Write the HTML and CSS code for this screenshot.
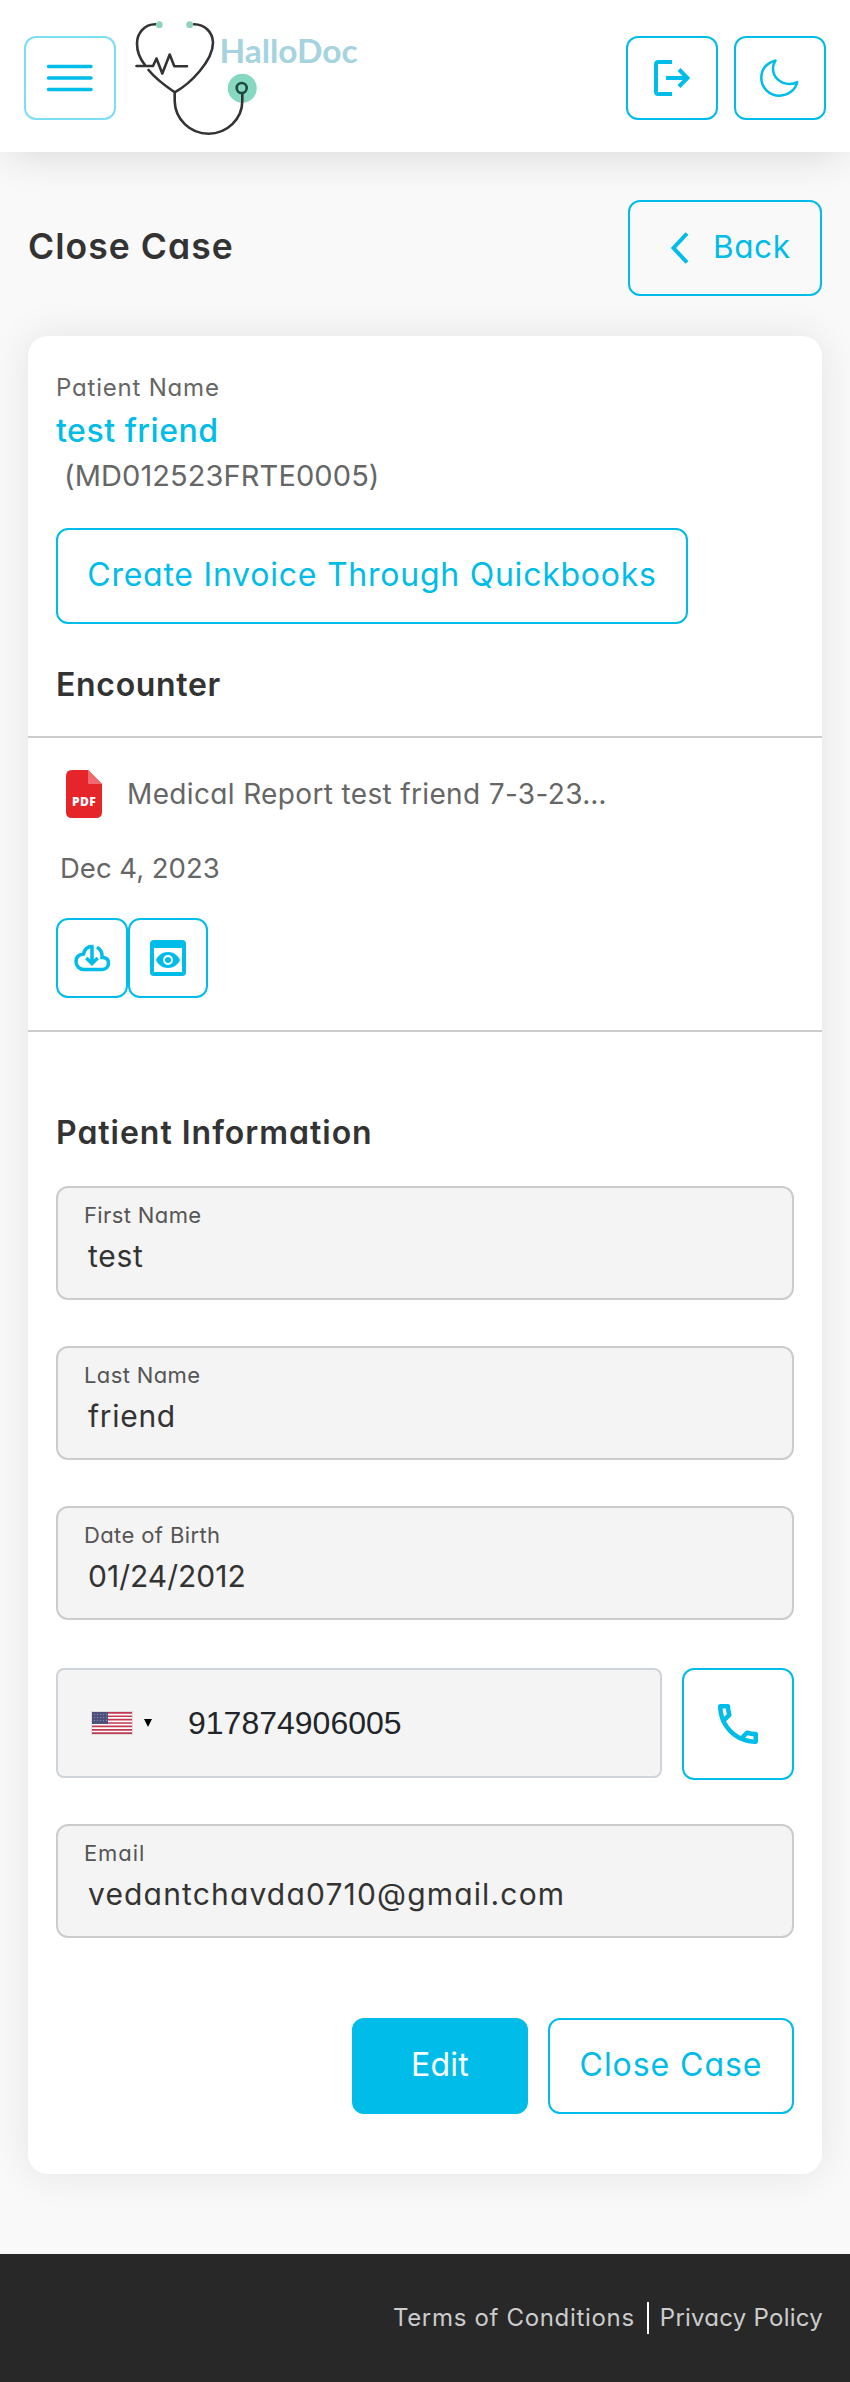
FILE: index.html
```
<!DOCTYPE html>
<html lang="en">
<head>
<meta charset="utf-8">
<title>HalloDoc - Close Case</title>
<link rel="stylesheet" href="styles.css">
</head>
<body>
<header class="topbar">
  <button class="icon-btn menu-btn" aria-label="Menu">
    <svg width="48" height="30" viewBox="0 0 48 30"><path d="M2.500 3.500h42.500M2.500 15h42.500M2.500 26.500h42.500" fill="none" stroke="#00bce9" stroke-width="3.500" stroke-linecap="round"/></svg>
  </button>
  <svg class="logo" width="240" height="136" viewBox="128 8 240 136" role="img" aria-label="HalloDoc">
    <circle cx="242.300" cy="88.300" r="14.500" fill="#86d8c0"/>
    <g fill="none" stroke="#333" stroke-width="2.600" stroke-linecap="round" stroke-linejoin="round">
      <path d="M156 24.300C144 24 137 34 137 43.500C137 52 140 59 145 65"/>
      <path d="M148.500 70C155 78 164 85 174.700 92.300C190 84 213 61 213 42.500C212.500 32 205 24.500 194 24.300"/>
      <path d="M174.700 92.300V101C175 119 190 133.700 208.500 133.700C227 133.700 242.300 119 242.300 101V93.500"/>
      <path d="M136.500 66H153L156.500 58.500L162.300 73.500L169.700 54.500L174.300 66.200H187"/>
      <circle cx="241.700" cy="88" r="5" stroke="#1f4a40"/>
    </g>
    <circle cx="159.300" cy="24.700" r="3.400" fill="#8fd3bf"/><circle cx="189.700" cy="24.700" r="3.400" fill="#8fd3bf"/>
    <text class="logo-text" x="219.500" y="62.500" textLength="138" lengthAdjust="spacingAndGlyphs">HalloDoc</text>
  </svg>
  <div class="topbar-actions">
    <button class="icon-btn" aria-label="Log out">
      <svg width="36" height="36" viewBox="0 0 36 36" fill="none" stroke="#00bce9" stroke-width="4"><path d="M18 2H4.500Q2 2 2 4.500V31.500Q2 34 4.500 34H18M12 18H33M25 9.500L33.500 18L25 26.500"/></svg>
    </button>
    <button class="icon-btn" aria-label="Dark mode">
      <svg width="40" height="40" viewBox="0 0 40 40" fill="none" stroke="#00bce9" stroke-width="2.500" stroke-linejoin="round" stroke-linecap="round"><path d="M15.500 2.500C5.500 5.500 1.300 12 1.300 19.800C1.300 30 9.500 37.700 19.500 37.700C28 37.700 35.500 32 37.200 24C35 25.500 32.500 26 29.500 26C20 26 13 19 13 10.500C13 7.500 13.800 5 15.500 2.500Z"/></svg>
    </button>
  </div>
</header>

<main class="page">
  <div class="title-row">
    <h1 class="title">Close Case</h1>
    <button class="btn back-btn"><svg width="20" height="34" viewBox="0 0 20 34"><path d="M17 2.500L3.500 17L17 31.500" fill="none" stroke="#00bce9" stroke-width="4"/></svg><span class="t-back">Back</span></button>
  </div>

  <section class="card">
    <div class="patient">
      <div class="patient-label">Patient Name</div>
      <div class="patient-name">test friend</div>
      <div class="patient-id">(MD012523FRTE0005)</div>
      <button class="btn invoice-btn">Create Invoice Through Quickbooks</button>
      <h2 class="heading encounter">Encounter</h2>
    </div>

    <div class="document">
      <div class="doc-name">
        <svg width="36" height="48" viewBox="0 0 36 48"><path d="M6 0H22L36 14V42Q36 48 30 48H6Q0 48 0 42V6Q0 0 6 0Z" fill="#e5252a"/><path d="M22 0L36 14H22Z" fill="#f0696c"/><text class="pdf-text" x="6" y="36" textLength="24" lengthAdjust="spacingAndGlyphs">PDF</text></svg>
        <span>Medical Report test friend 7-3-23…</span>
      </div>
      <div class="doc-date">Dec 4, 2023</div>
      <div class="doc-actions">
        <button class="doc-btn download" aria-label="Download">
          <svg width="38" height="28" viewBox="0 0 38 28" fill="none" stroke="#00bce9" stroke-width="3.500"><path d="M20.500 2.500H19C14.500 2.500 11.500 5.500 10.500 10C5.500 10.500 3 13.500 3 17.500C3 22 6.500 25.500 11 25.500H29C33 25.500 35.500 22.500 35.500 19C35.500 15.500 33 13.500 29 13.500V11.500C29 8 27 5 24 3.200"/><path d="M19 2.500V19M13.300 14L19 19.500L24.700 14"/></svg>
        </button>
        <button class="doc-btn view" aria-label="View">
          <svg width="36" height="36" viewBox="0 0 36 36"><path fill="#00bce9" fill-rule="evenodd" d="M4 0H32Q36 0 36 4V32Q36 36 32 36H4Q0 36 0 32V4Q0 0 4 0ZM4 8V32H32V8ZM6 20C8 15.500 12.500 12 18 12S28 15.500 30 20C28 24.500 23.500 28 18 28S8 24.500 6 20Z"/><circle cx="18" cy="20" r="4" fill="#00bce9" stroke="#fff" stroke-width="2"/></svg>
        </button>
      </div>
    </div>

    <form class="info">
      <h2 class="heading">Patient Information</h2>
      <div class="field"><span class="label">First Name</span><span class="value">test</span></div>
      <div class="field"><span class="label">Last Name</span><span class="value">friend</span></div>
      <div class="field"><span class="label">Date of Birth</span><span class="value date">01/24/2012</span></div>
      <div class="phone-row">
        <div class="phone">
          <svg class="flag" width="42" height="24" viewBox="-1 -1 42 24"><path d="M-.5-.5h41v23h-41z" fill="#fff" stroke="#ddd"/><path d="M0 .850H40M0 4.250H40M0 7.600H40M0 11H40M0 14.400H40M0 17.800H40M0 21.150H40" stroke="#c23a52" stroke-width="1.700"/><path d="M0 0H16V12H0z" fill="#50507e"/><path d="M2 2.500H15M2 5.500H15M2 8.500H15" stroke="#8c8caf" stroke-width="1" stroke-dasharray="1 2"/></svg>
          <svg class="caret" width="8" height="8" viewBox="0 0 8 8"><path d="M0 0H8L4 8Z" fill="#000"/></svg>
          <span>917874906005</span>
        </div>
        <button type="button" class="call-btn" aria-label="Call">
          <svg class="call-icon" width="40" height="40" viewBox="3 3 18 18"><path fill="#00bce9" d="M6.540 5c.060.890.210 1.760.450 2.590l-1.200 1.200c-.410-1.200-.670-2.470-.760-3.790h1.510m9.860 12.020c.850.240 1.720.390 2.600.450v1.490c-1.320-.090-2.590-.350-3.800-.750l1.200-1.190M7.500 3H4c-.550 0-1 .450-1 1 0 9.390 7.610 17 17 17 .550 0 1-.450 1-1v-3.490c0-.550-.450-1-1-1-1.240 0-2.450-.200-3.570-.570a.840.840 0 0 0-.310-.050c-.260 0-.510.100-.710.290l-2.200 2.200a15.150 15.150 0 0 1-6.590-6.590l2.200-2.200c.280-.280.360-.670.250-1.020A11.360 11.360 0 0 1 8.500 4c0-.550-.450-1-1-1z"/></svg>
        </button>
      </div>
      <div class="field"><span class="label email-label">Email</span><span class="value email">vedantchavda0710@gmail.com</span></div>
      <div class="form-actions">
        <button type="button" class="btn edit-btn">Edit</button>
        <button type="button" class="btn close-btn">Close Case</button>
      </div>
    </form>
  </section>
</main>

<footer class="footer"><a class="terms">Terms of Conditions</a><a class="privacy">Privacy Policy</a></footer>
</body>
</html>
```

FILE: styles.css
```
* { box-sizing: border-box; }
body {
  margin: 0;
  background: #f9f9f9;
  color: #666;
  font-family: Inter, "Open Sans", sans-serif;
  font-feature-settings: "cv11";
  font-weight: 370;
}
svg { display: block; flex: none; }
button {
  margin: 0;
  padding: 0;
  background: transparent;
  border: 2px solid #00bce9;
  border-radius: 12px;
  color: #00bce9;
  font: inherit;
  font-feature-settings: inherit;
  display: flex;
  align-items: center;
  justify-content: center;
}
span, a, div { white-space: nowrap; }

.topbar {
  position: relative;
  height: 152px;
  padding: 8px 24px;
  display: flex;
  align-items: center;
  background: #fff;
  box-shadow: 0 10px 40px -8px rgba(0, 0, 0, .14);
}
.topbar .icon-btn { margin-top: 4px; }
.icon-btn { width: 92px; height: 84px; }
.menu-btn { border-color: #7cdef6; }
.logo { margin-left: 12px; }
.logo-text { font: 700 32px Lato, sans-serif; fill: #a5d3df; }
.topbar-actions { margin-left: auto; display: flex; gap: 16px; }

.page { padding: 48px 28px 80px; }
.title-row { display: flex; justify-content: space-between; align-items: center; height: 96px; margin-bottom: 40px; }
.title { margin: 0; padding-bottom: 3px; color: #333; font-size: 35.5px; font-weight: 600; letter-spacing: 1.05px; }
.btn { height: 96px; padding-bottom: 3px; font-size: 32px; }
.back-btn { width: 194px; padding: 0 0 0 40px; justify-content: flex-start; gap: 23px; }
.t-back { padding-bottom: 3px; font-size: 31.5px; letter-spacing: .6px; }

.card { background: #fff; border-radius: 20px; box-shadow: 0 0 40px rgba(0, 0, 0, .09); height: 1838px; }
.patient { padding: 32px 28px 0; height: 400px; }
.patient-label { font-size: 24px; line-height: 40px; letter-spacing: .8px; }
.patient-name { color: #00bce9; font-size: 32px; font-weight: 500; line-height: 46px; letter-spacing: .52px; }
.patient-id { padding-left: 8px; font-size: 29px; line-height: 44px; letter-spacing: .1px; }
.invoice-btn { width: 632px; margin-top: 30px; letter-spacing: .76px; }
.heading { margin: 0; color: #333; font-size: 32px; font-weight: 600; line-height: 48px; letter-spacing: .98px; }
.encounter { margin-top: 37px; letter-spacing: .68px; }

.document { height: 296px; padding: 32px 28px 0; border-top: 2px solid #ccc; border-bottom: 2px solid #ccc; font-size: 28px; }
.doc-name { display: flex; align-items: center; gap: 25px; padding-left: 10px; height: 48px; letter-spacing: .35px; }
.doc-date { margin-top: 28px; padding-left: 4px; font-size: 27.500px; line-height: 45px; letter-spacing: 0; }
.doc-actions { display: flex; margin-top: 27px; }
.doc-btn { height: 80px; }
.download { width: 72px; }
.view { width: 80px; }
.pdf-text { font: 800 12.500px "Open Sans", sans-serif; fill: #fff; }

.info { padding: 77px 28px 0; }
.info .heading { margin-bottom: 29px; }
.field {
  display: flex;
  flex-direction: column;
  height: 114px;
  margin-bottom: 46px;
  padding: 11px 26px 0;
  background: #f4f4f4;
  border: 2px solid #ccc;
  border-radius: 12px;
}
.label { color: #555; font-size: 22px; line-height: 32px; letter-spacing: .38px; }
.email-label { letter-spacing: .9px; }
.value { padding-left: 4px; margin-top: 3px; color: #333; font-size: 30px; line-height: 44px; letter-spacing: .7px; }
.value.date { letter-spacing: 0; }
.value.email { letter-spacing: 1.16px; }

.phone-row { display: flex; gap: 20px; margin-top: 48px; margin-bottom: 44px; }
.phone {
  display: flex;
  align-items: center;
  width: 606px;
  height: 110px;
  padding-left: 33px;
  background: #f4f4f4;
  border: 2px solid #ced4da;
  border-radius: 8px;
  color: #212529;
  font: 400 32px "Liberation Sans", Arial, sans-serif;
}
.caret { margin-left: 11px; margin-right: 36px; }
.call-btn { width: 112px; height: 112px; }

.form-actions { display: flex; justify-content: flex-end; gap: 20px; margin-top: 80px; }
.edit-btn { width: 176px; background: #00bce9; color: #fff; letter-spacing: .2px; }
.close-btn { width: 246px; letter-spacing: .95px; }

.footer {
  display: flex;
  justify-content: flex-end;
  height: 128px;
  padding: 48px 27px 0;
  background: #282828;
  color: #ccc;
  font-size: 24px;
  line-height: 31px;
}
.terms { height: 32px; padding-right: 12px; border-right: 2px solid #fff; letter-spacing: .68px; }
.privacy { padding-left: 11px; letter-spacing: .25px; }
```
